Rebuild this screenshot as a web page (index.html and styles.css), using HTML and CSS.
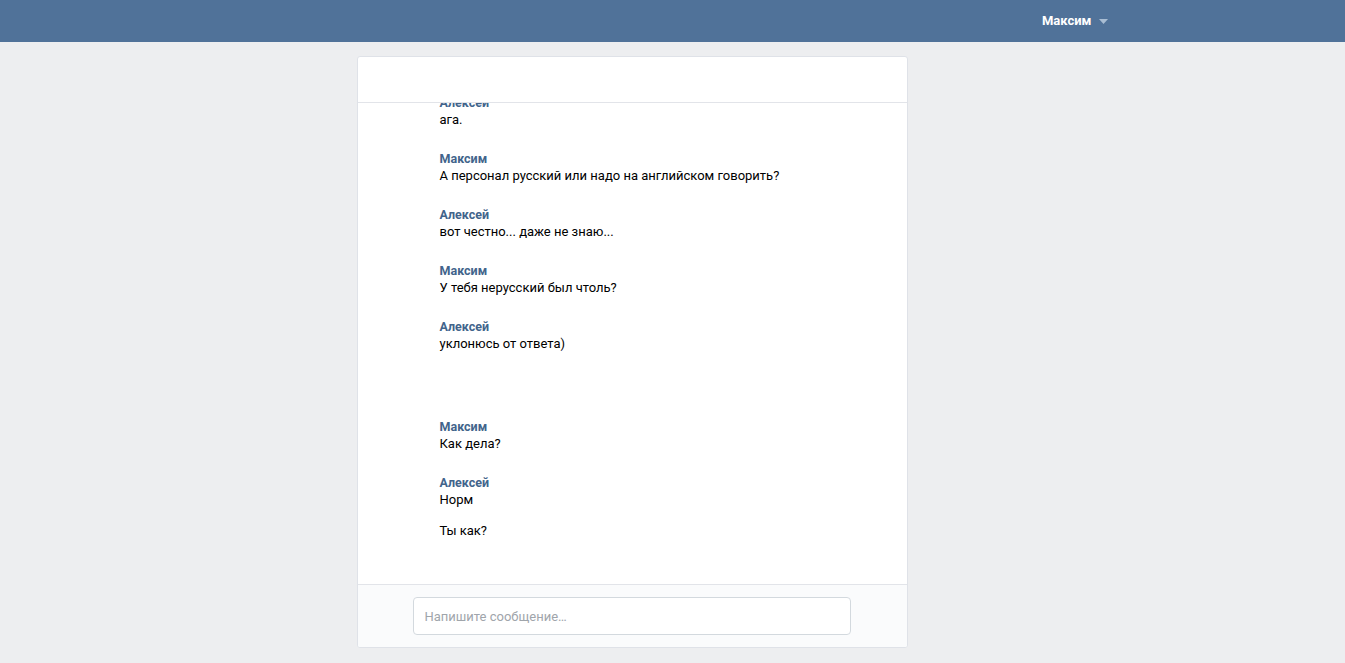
FILE: index.html
```html
<!DOCTYPE html>
<html lang="ru">
<head>
<meta charset="utf-8">
<title>Сообщения</title>
<link rel="stylesheet" href="styles.css">
</head>
<body>
<header class="topbar">
  <div class="topbar-inner">
    <div class="user">
      <span class="user-name">Максим</span>
      <svg class="caret" width="9" height="5" viewBox="0 0 9 5"><path d="M0 0h9L4.5 5z" fill="#a9bdd3"/></svg>
    </div>
  </div>
</header>
<main class="page">
  <section class="chat">
    <div class="chat-head"></div>
    <div class="chat-body">
      <div class="history">
        <div class="group">
          <div class="author">Алексей</div>
          <div class="msg">ага.</div>
        </div>
        <div class="group">
          <div class="author">Максим</div>
          <div class="msg">А персонал русский или надо на английском говорить?</div>
        </div>
        <div class="group">
          <div class="author">Алексей</div>
          <div class="msg">вот честно... даже не знаю...</div>
        </div>
        <div class="group">
          <div class="author">Максим</div>
          <div class="msg">У тебя нерусский был чтоль?</div>
        </div>
        <div class="group">
          <div class="author">Алексей</div>
          <div class="msg">уклонюсь от ответа)</div>
        </div>
        <div class="spacer"></div>
        <div class="group">
          <div class="author">Максим</div>
          <div class="msg">Как дела?</div>
        </div>
        <div class="group">
          <div class="author">Алексей</div>
          <div class="msg">Норм</div>
          <div class="msg">Ты как?</div>
        </div>
      </div>
    </div>
    <div class="chat-foot">
      <input class="composer" type="text" placeholder="Напишите сообщение…">
    </div>
  </section>
</main>
</body>
</html>
```

FILE: styles.css
```css
* { box-sizing: border-box; }
html, body { margin: 0; padding: 0; }
body {
  background: #edeef0;
  font-family: Roboto, "Open Sans", "Liberation Sans", sans-serif;
  font-size: 13px;
  color: #000;
  overflow: hidden;
}
.topbar {
  height: 42px;
  background: #507299;
}
.topbar-inner {
  width: 960px;
  margin: 0 auto;
  height: 42px;
  display: flex;
  justify-content: flex-end;
  align-items: center;
  padding-right: 45px;
}
.user {
  display: flex;
  align-items: center;
  gap: 7px;
}
.user-name {
  color: #fff;
  font-weight: 700;
  font-size: 13px;
  line-height: 16px;
  padding-bottom: 1px;
}
.caret { display: block; }
.page {
  width: 960px;
  margin: 0 auto;
  padding: 14px 0 16px 164px;
}
.chat {
  width: 551px;
  background: #fff;
  border: 1px solid #dfe2e8;
  border-radius: 3px;
  display: flex;
  flex-direction: column;
  overflow: hidden;
}
.chat-head {
  height: 46px;
  border-bottom: 1px solid #e2e4e9;
}
.chat-body {
  height: 481px;
  overflow: hidden;
  display: flex;
  flex-direction: column;
  justify-content: flex-end;
  padding: 0 0 45px 82px;
}
.history { display: flex; flex-direction: column; }
.group { display: flex; flex-direction: column; }
.group + .group { margin-top: 22px; }
.spacer { height: 66px; }
.author {
  color: #42648b;
  font-weight: 700;
  font-size: 12.5px;
  line-height: 17px;
}
.msg {
  line-height: 17px;
  color: #000;
}
.msg + .msg { margin-top: 14px; }
.chat-foot {
  height: 63px;
  border-top: 1px solid #e2e4e9;
  background: #fafbfc;
  padding: 12px 0 0 55px;
}
.composer {
  display: block;
  width: 438px;
  height: 38px;
  border: 1px solid #d3d9de;
  border-radius: 4px;
  background: #fff;
  padding: 0 11px;
  font-family: Roboto, "Open Sans", "Liberation Sans", sans-serif;
  font-size: 13px;
  outline: none;
}
.composer::placeholder { color: #a0a5ab; opacity: 1; }
```
